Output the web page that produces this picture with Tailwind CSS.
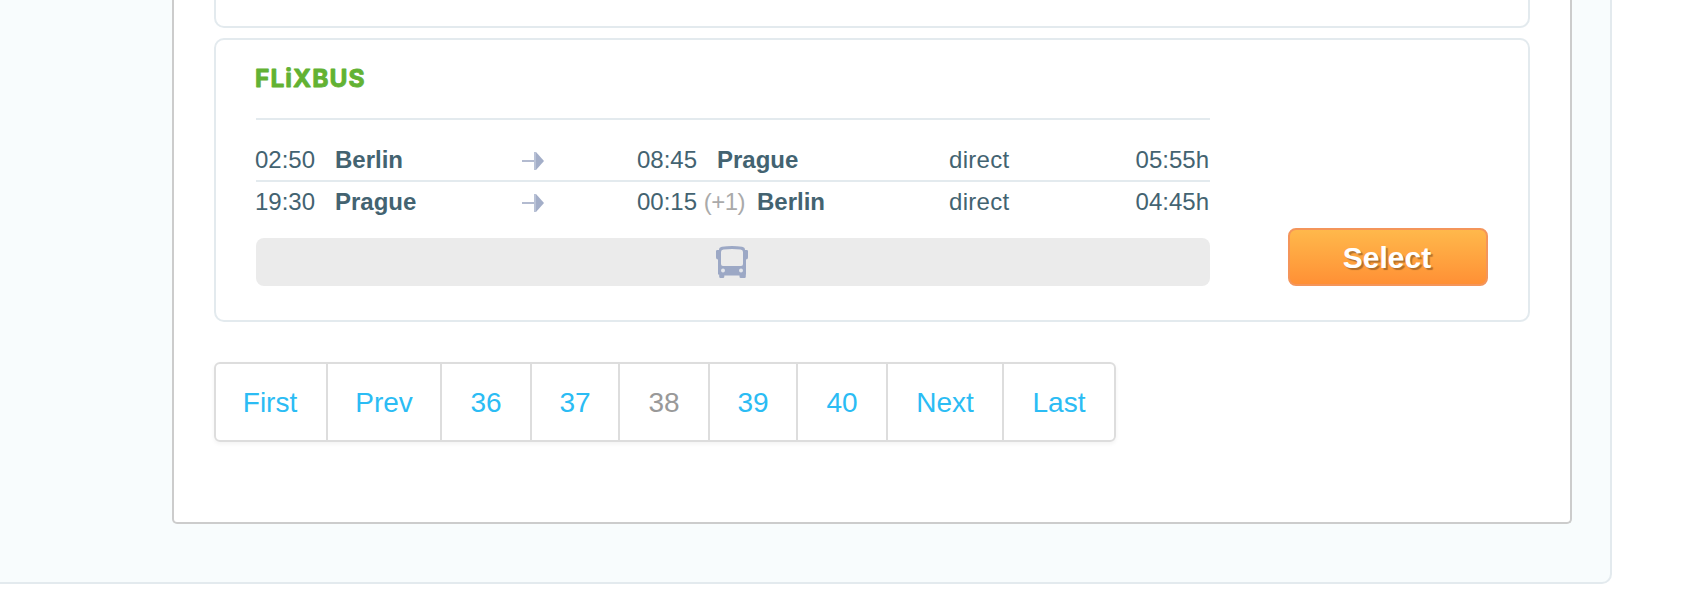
<!DOCTYPE html>
<html lang="en">
<head>
<meta charset="utf-8">
<title>Bus connections</title>
<script src="https://cdn.jsdelivr.net/npm/@tailwindcss/browser@4"></script>
</head>
<body class="h-[612px] overflow-hidden bg-white font-['Liberation_Sans',Arial,sans-serif] text-[#436371]">
<div class="h-[584px] w-[1612px] rounded-br-[10px] border-r-2 border-b-2 border-[#e3eaee] bg-[#f8fcfd] pl-[172px]">
  <main class="h-[524px] w-[1400px] rounded-b-[5px] border-x-2 border-b-2 border-[#ccc] bg-white px-10">
    <section class="h-7 rounded-b-[10px] border-x-2 border-b-2 border-[#e3eaee]"></section>
    <section class="mt-2.5 flex h-[284px] justify-between rounded-[10px] border-2 border-[#e3eaee] px-10">
      <div class="w-[954px]">
        <div class="flex h-20 items-start border-b-2 border-[#e3eaee] pt-6">
          <svg class="h-7 w-[112px] overflow-visible" viewBox="0 0 112 28"><text x="-1" y="22.700" textLength="109.5" lengthAdjust="spacing" font-family="Inter, sans-serif" font-weight="700" font-size="24.500" fill="#62b233" stroke="#62b233" stroke-width=".9" stroke-linejoin="round">FLiXBUS</text></svg>
        </div>
        <div class="pt-5 text-2xl leading-10">
          <div class="flex h-[42px] border-b-2 border-[#e3eaee]">
            <div class="-ml-px w-20">02:50</div>
            <div class="w-[187px] font-bold">Berlin</div>
            <svg class="mt-3 h-[18px] w-[22px]" viewBox="0 0 22 18"><path d="M0 8h12v2H0z" fill="#b3bbd0"/><path d="M12 0h2l8 9-8 9h-2z" fill="#a3aec8"/><path d="M12 0h2v18h-2z" fill="#b9c2d6"/></svg>
            <div class="ml-[93px] w-[80px]">08:45</div>
            <div class="w-[232px] font-bold">Prague</div>
            <div class="tracking-[0.3px]">direct</div>
            <div class="ml-auto pr-px">05:55h</div>
          </div>
          <div class="flex h-10">
            <div class="-ml-px w-20">19:30</div>
            <div class="w-[187px] font-bold">Prague</div>
            <svg class="mt-3 h-[18px] w-[22px]" viewBox="0 0 22 18"><path d="M0 8h12v2H0z" fill="#b3bbd0"/><path d="M12 0h2l8 9-8 9h-2z" fill="#a3aec8"/><path d="M12 0h2v18h-2z" fill="#b9c2d6"/></svg>
            <div class="ml-[93px] w-[120px] whitespace-nowrap">00:15 <span class="tracking-[-0.5px] text-[#aaa]">(+1)</span></div>
            <div class="w-[192px] font-bold">Berlin</div>
            <div class="tracking-[0.3px]">direct</div>
            <div class="ml-auto pr-px">04:45h</div>
          </div>
        </div>
        <div class="mt-4 flex h-12 justify-center rounded-lg bg-[#ebebeb] pt-2 pr-[2px]">
          <svg class="h-8 w-8" viewBox="0 0 32 32" fill="#9ca8c5">
            <path fill-rule="evenodd" d="M6 .8Q16-.8 26 .8Q29 1.400 29 4h1.800q1.200 0 1.200 1.300v6.200q0 2-2 2v15h-.200v2.200q0 1.300-1.300 1.300h-3.700q-1.300 0-1.300-1.300V29.500H8.300v1.200q0 1.300-1.300 1.300H4.500q-1.300 0-1.300-1.300v-2.200H2v-15q-2 0-2-2V5.300Q0 4 1.200 4H3Q3 1.400 6 .8zM7.500 3.500Q5 3.800 5 6V18Q5 20 7 20H25Q27 20 27 18V6Q27 3.800 24.500 3.500Q16 2.300 7.500 3.500z"/>
            <circle cx="7" cy="24.500" r="2" fill="#e3e6eb"/><circle cx="25" cy="24.500" r="2" fill="#e3e6eb"/>
          </svg>
        </div>
      </div>
      <button class="mt-[188px] h-[58px] w-[200px] rounded-lg border-2 border-[#f4955a] bg-linear-to-b from-[#ffb84b] to-[#ff9035] pr-0.5 text-[30px] leading-[54px] font-bold text-white [text-shadow:2px_2px_1px_rgba(0,0,0,0.3)]"><span class="block pt-px">Select</span></button>
    </section>
    <nav class="mt-10 flex h-20 w-[902px] divide-x-2 divide-[#ddd] rounded-md border-2 border-[#ddd] text-center text-[28px] leading-[78px] text-[#2bbcf4] shadow-[0_2px_4px_rgba(0,0,0,0.05)]">
      <a class="h-[76px] w-[112px] pr-0.5">First</a>
      <a class="h-[76px] w-[114px]">Prev</a>
      <a class="h-[76px] w-[90px]">36</a>
      <a class="h-[76px] w-[88px]">37</a>
      <a class="h-[76px] w-[90px] text-[#999]">38</a>
      <a class="h-[76px] w-[88px]">39</a>
      <a class="h-[76px] w-[90px]">40</a>
      <a class="h-[76px] w-[116px]">Next</a>
      <a class="h-[76px] w-[110px]">Last</a>
    </nav>
  </main>
</div>
</body>
</html>
